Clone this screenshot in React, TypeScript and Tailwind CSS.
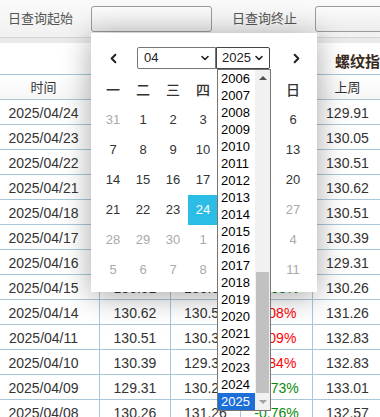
import { ChevronLeft, ChevronRight, ChevronDown } from 'lucide-react';

const FONT = { fontFamily: '"Liberation Sans", "Noto Sans CJK SC", sans-serif' };

const dates = [
  '2025/04/24', '2025/04/23', '2025/04/22', '2025/04/21', '2025/04/18', '2025/04/17', '2025/04/16',
  '2025/04/15', '2025/04/14', '2025/04/11', '2025/04/10', '2025/04/09', '2025/04/08',
];
const values = [129.55, 129.6, 129.72, 129.65, 129.8, 129.91, 130.05, 130.51, 130.62, 130.51, 130.39, 129.31, 130.26, 131.26];
const lastWeek = ['129.91', '130.05', '130.51', '130.62', '130.51', '130.39', '129.31', '130.26', '131.26', '132.83', '132.83', '133.01', '132.57'];

const rows = dates.map((d, i) => {
  const v = values[i];
  const p = values[i + 1];
  const chg = ((v / p - 1) * 100).toFixed(2);
  return { d, v: v.toFixed(2), p: p.toFixed(2), chg, up: v >= p, w: lastWeek[i] };
});

const weekdays = ['一', '二', '三', '四', '五', '六', '日'];

// Mon 31 Mar .. Sun 11 May
const days: { n: number; muted: boolean; sel?: boolean }[] = [];
days.push({ n: 31, muted: true });
for (let i = 1; i <= 30; i++) days.push({ n: i, muted: i > 24, sel: i === 24 });
for (let i = 1; i <= 11; i++) days.push({ n: i, muted: true });

const years = Array.from({ length: 20 }, (_, i) => 2006 + i);

function Cell({ w, children, className = '' }: { w: string; children?: React.ReactNode; className?: string }) {
  return (
    <div className={`${w} shrink-0 h-full border-r border-[#a8c8da] flex items-center justify-center pt-[2px] ${className}`}>
      {children}
    </div>
  );
}

function DataTable() {
  return (
    <div className="w-[730px]">
      <div className="h-[31px] pt-[8px] flex items-center justify-center text-[15px] font-bold text-[#3a2a1a]">螺纹指数</div>
      <div className="flex h-[26px] border-y border-[#a8c8da] text-[13px] text-[#333] bg-linear-to-b from-white to-[#f6f6f6]">
        <Cell w="w-[100px]" className="pr-3">时间</Cell>
        <Cell w="w-[71px]">指数</Cell>
        <Cell w="w-[70px]">前日</Cell>
        <Cell w="w-[72px]">涨跌</Cell>
        <Cell w="w-[70px]">上周</Cell>
        <Cell w="w-[80px]">周涨跌</Cell>
        <Cell w="w-[70px]">上月</Cell>
        <Cell w="w-[80px]">月涨跌</Cell>
        <Cell w="w-[117px]">去年同期</Cell>
      </div>
      {rows.map((r) => (
        <div key={r.d} className="flex h-[25px] border-b border-[#a8c8da] text-[14px] text-[#333]">
          <Cell w="w-[100px]" className="pr-3">{r.d}</Cell>
          <Cell w="w-[71px]">{r.v}</Cell>
          <Cell w="w-[70px]">{r.p}</Cell>
          <Cell w="w-[72px]" className={r.up ? 'text-[#ff0000]' : 'text-[#0a8a0a]'}>{r.chg}%</Cell>
          <Cell w="w-[70px]">{r.w}</Cell>
          <Cell w="w-[80px]" />
          <Cell w="w-[70px]" />
          <Cell w="w-[80px]" />
          <Cell w="w-[117px]" />
        </div>
      ))}
    </div>
  );
}

function DatePicker() {
  return (
    <div className="absolute left-[91px] top-[33px] w-[226px] h-[259px] bg-white shadow-[0_4px_28px_rgba(0,0,0,0.35)] pl-[7px] pt-[14px]">
      <div className="flex items-center h-[22px] w-[210px]">
        <div className="w-[30px] flex justify-center text-[#222]">
          <ChevronLeft size={15} strokeWidth={3.2} />
        </div>
        <div className="ml-[9px] w-[79px] h-[22px] border border-[#767676] rounded-l-[2px] flex items-center justify-between pl-[6px] pr-[4px] text-[13px] text-[#222]">
          <span>04</span>
          <ChevronDown size={12} strokeWidth={3.2} />
        </div>
        <div className="w-[54px] h-[22px] border border-[#444] rounded-r-[2px] flex items-center justify-between pl-[5px] pr-[4px] text-[13px] text-[#222]">
          <span>2025</span>
          <ChevronDown size={12} strokeWidth={3.2} />
        </div>
        <div className="ml-auto w-[24px] flex justify-center text-[#222]">
          <ChevronRight size={15} strokeWidth={3.2} />
        </div>
      </div>
      <div className="mt-[6px] grid grid-cols-[repeat(7,30px)]">
        {weekdays.map((w) => (
          <div key={w} className="h-[30px] flex items-center justify-center text-[14px] font-medium text-[#333]">{w}</div>
        ))}
        {days.map((d, i) => (
          <div
            key={i}
            className={`h-[30px] flex items-center justify-center text-[13px] ${
              d.sel ? 'bg-[#2bbde6] text-white' : d.muted ? 'text-[#aaa]' : 'text-[#333]'
            }`}
          >
            {d.n}
          </div>
        ))}
      </div>
    </div>
  );
}

function YearList() {
  return (
    <div className="absolute left-[217px] top-[69px] w-[54px] h-[342px] border border-[#767676] bg-white flex text-[13px] text-black">
      <div className="flex-1 flex flex-col">
        {years.map((y) => (
          <div key={y} className={`h-[17px] flex items-center pl-[3px] ${y === 2025 ? 'bg-[#1d6fd8] text-white' : ''}`}>{y}</div>
        ))}
      </div>
      <div className="w-[15px] bg-[#f1f1f1] flex flex-col items-center">
        <div className="h-[16px] flex items-center justify-center">
          <div className="w-0 h-0 border-x-[4px] border-x-transparent border-b-[4px] border-b-[#505050]" />
        </div>
        <div className="flex-1 w-full flex flex-col justify-end px-[1px]">
          <div className="h-[121px] bg-[#c1c1c1]" />
        </div>
        <div className="h-[17px] flex items-center justify-center">
          <div className="w-0 h-0 border-x-[4px] border-x-transparent border-t-[4px] border-t-[#a3a3a3]" />
        </div>
      </div>
    </div>
  );
}

export default function App() {
  return (
    <div className="relative w-[380px] h-[417px] overflow-hidden bg-white" style={FONT}>
      <div className="h-[38px] flex items-center pl-2 whitespace-nowrap bg-linear-to-b from-[#fafafa] to-[#f1f1f1] border-b border-[#d4d4d4] text-[13px] text-[#555]">
        <span className="mr-[18px]">日查询起始</span>
        <div className="w-[121px] h-[26px] shrink-0 mr-[20px] border border-[#9a9a9a] rounded-[3px] bg-linear-to-b from-[#fbfbfb] to-[#ececec]" />
        <span className="mr-[18px]">日查询终止</span>
        <div className="w-[121px] h-[26px] shrink-0 border border-[#9a9a9a] rounded-[3px] bg-linear-to-b from-[#fbfbfb] to-[#ececec]" />
      </div>
      <div className="h-[5px] bg-[#eaeaea]" />
      <DataTable />
      <DatePicker />
      <YearList />
    </div>
  );
}
